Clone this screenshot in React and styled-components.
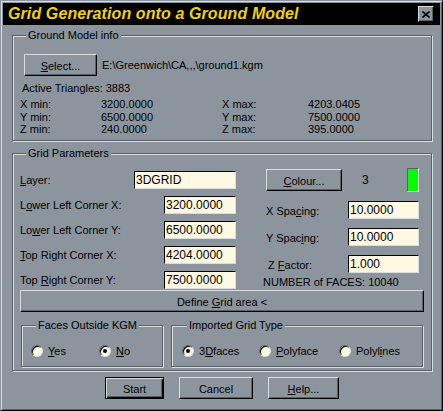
import React from "react";
import styled, { createGlobalStyle } from "styled-components";

const BG = "#8c959e";
const LIGHT = "#d9dde0";
const DARK = "#5a6168";
const FIELD = "#fff8e2";

const Global = createGlobalStyle`
  body {
    margin: 0;
    background: ${BG};
    font-family: "Liberation Sans", Arial, sans-serif;
    font-size: 11px;
    color: #000;
  }
  u { text-underline-offset: 1px; }
`;

const Window = styled.div`
  width: 443px;
  height: 411px;
  box-sizing: border-box;
  background: ${BG};
  border: 1px solid;
  border-color: ${BG} #000 #000 ${BG};
  box-shadow: inset 1px 1px 0 ${LIGHT}, inset -1px -1px 0 ${DARK};
  padding: 2px;
  display: flex;
  flex-direction: column;
`;

const TitleBar = styled.div`
  height: 22px;
  background: #000;
  display: flex;
  align-items: center;
  justify-content: space-between;
  padding: 0 6px 0 5px;
`;

const Title = styled.div`
  color: #f0d010;
  font: italic bold 16px "Liberation Sans", Arial, sans-serif;
  letter-spacing: 0.1px;
`;

const CloseButton = styled.div`
  width: 16px;
  height: 16px;
  box-sizing: border-box;
  background: ${BG};
  border: 1px solid;
  border-color: ${LIGHT} #000 #000 ${LIGHT};
  box-shadow: inset -1px -1px 0 ${DARK};
  display: flex;
  align-items: center;
  justify-content: center;
`;

const Body = styled.div`
  padding: 4px 8px 0 9px;
  display: flex;
  flex-direction: column;
`;

const Group = styled.fieldset`
  margin: ${(p) => p.$mt || 0}px 0 0 0;
  padding: ${(p) => p.$pad};
  border: 1px solid ${DARK};
  box-shadow: inset 1px 1px 0 ${LIGHT}, 1px 1px 0 ${LIGHT};
  min-inline-size: 0;
  box-sizing: border-box;
  width: ${(p) => (p.$w ? p.$w + "px" : "auto")};
  flex: ${(p) => (p.$w ? "none" : 1)};
`;

const Legend = styled.legend`
  padding: 0 2px;
  margin-left: ${(p) => p.$ml || 6}px;
  background: ${BG};
  line-height: 13px;
`;

const Button = styled.div`
  box-sizing: border-box;
  height: 22px;
  width: ${(p) => (p.$w ? p.$w + "px" : "auto")};
  display: flex;
  align-items: center;
  justify-content: center;
  border: 1px solid;
  border-color: ${(p) => (p.$default ? "#000" : `${LIGHT} #000 #000 ${LIGHT}`)};
  box-shadow: ${(p) =>
    p.$default
      ? `inset 1px 1px 0 ${LIGHT}, inset -1px -1px 0 #000, inset -2px -2px 0 ${DARK}`
      : `inset -1px -1px 0 ${DARK}`};
  background: ${BG};
  padding-top: 1px;
  flex: none;
`;

const SelectRow = styled.div`
  display: flex;
  align-items: center;
  gap: 5px;
  padding-left: 4px;
`;

const Line = styled.div`
  line-height: 13px;
  margin: ${(p) => p.$m || 0};
`;

const Stats = styled.div`
  display: grid;
  grid-template-columns: 81px 121px 86px auto;
  line-height: 12.7px;
  margin-top: 3px;
`;

const Columns = styled.div`
  display: flex;
  gap: 30px;
  align-items: flex-start;
`;

const LeftCol = styled.div`
  width: 216px;
  display: flex;
  flex-direction: column;
  gap: 7px;
  padding-top: 1px;
`;

const FieldRow = styled.div`
  display: flex;
  align-items: center;
  justify-content: space-between;
  height: 18px;
`;

const Field = styled.div`
  box-sizing: border-box;
  width: ${(p) => p.$w}px;
  height: 18px;
  background: ${FIELD};
  border: 1px solid;
  border-color: #000 ${LIGHT} ${LIGHT} #000;
  font-size: 12px;
  line-height: 16px;
  padding-left: 1px;
`;

const RightCol = styled.div`
  width: 153px;
  display: flex;
  flex-direction: column;
`;

const ColourRow = styled.div`
  display: flex;
  align-items: center;
  height: 24px;
  margin-top: -2px;
`;

const ColourNum = styled.span`
  margin-left: 20px;
  font-size: 12px;
`;

const Swatch = styled.div`
  margin-left: auto;
  width: 12px;
  height: 24px;
  box-sizing: border-box;
  background: #00ff00;
  border: 1px solid;
  border-color: ${DARK} #fff #fff ${DARK};
`;

const RightFields = styled.div`
  display: flex;
  flex-direction: column;
  gap: 9px;
  margin-top: 9px;
`;

const RightLabel = styled.span`
  padding-left: ${(p) => p.$indent || 0}px;
  padding-top: ${(p) => p.$drop || 0}px;
`;

const FacesCount = styled.div`
  line-height: 13px;
  margin-top: 3px;
  margin-left: -3px;
`;

const WideButton = styled(Button)`
  margin-top: 1px;
`;

const SubGroups = styled.div`
  display: flex;
  gap: 8px;
  margin: 7px 1px 0 1px;
`;

const Radios = styled.div`
  display: grid;
  grid-template-columns: ${(p) => p.$cols};
  align-items: center;
  height: 13px;
`;

const RadioItem = styled.div`
  display: flex;
  align-items: center;
  gap: 5px;
`;

const RadioDot = styled.span`
  width: 12px;
  height: 12px;
  box-sizing: border-box;
  border-radius: 50%;
  background: ${FIELD};
  border: 1px solid;
  border-color: ${DARK} ${LIGHT} ${LIGHT} ${DARK};
  box-shadow: inset 1px 1px 0 #000;
  position: relative;
  &::after {
    content: "";
    display: ${(p) => (p.$on ? "block" : "none")};
    position: absolute;
    width: 4px;
    height: 4px;
    border-radius: 50%;
    background: #000;
    left: 3px;
    top: 3px;
  }
`;

const Footer = styled.div`
  display: flex;
  justify-content: center;
  gap: 15px;
  margin-top: 6px;
`;

function Radio({ on, children }) {
  return (
    <RadioItem>
      <RadioDot $on={on} />
      <span>{children}</span>
    </RadioItem>
  );
}

const leftFields = [
  { label: <><u>L</u>ayer:</>, value: "3DGRID", w: 102 },
  { label: <>L<u>o</u>wer Left Corner X:</>, value: "3200.0000", w: 72 },
  { label: <>Lo<u>w</u>er Left Corner Y:</>, value: "6500.0000", w: 72 },
  { label: <><u>T</u>op Right Corner X:</>, value: "4204.0000", w: 72 },
  { label: <>Top <u>R</u>ight Corner Y:</>, value: "7500.0000", w: 72 },
];

const rightFields = [
  { label: <>X Spa<u>c</u>ing:</>, value: "10.0000" },
  { label: <>Y Spac<u>i</u>ng:</>, value: "10.0000" },
  { label: <>Z <u>F</u>actor:</>, value: "1.000", indent: 2 },
];

export default function App() {
  return (
    <>
      <Global />
      <Window>
        <TitleBar>
          <Title>Grid Generation onto a Ground Model</Title>
          <CloseButton>
            <svg width="8" height="7" viewBox="0 0 8 7">
              <path d="M0.5 0.5 L7.5 6.5 M7.5 0.5 L0.5 6.5" stroke="#000" strokeWidth="1.6" />
            </svg>
          </CloseButton>
        </TitleBar>
        <Body>
          <Group $pad="12px 8px 4px 7px">
            <Legend>Ground Model info</Legend>
            <SelectRow>
              <Button $w={73}>
                <span>
                  <u>S</u>elect...
                </span>
              </Button>
              <span>E:\Greenwich\CA,,,\ground1.kgm</span>
            </SelectRow>
            <Line $m="6px 0 0 2px">Active Triangles: 3883</Line>
            <Stats>
              <span>X min:</span>
              <span>3200.0000</span>
              <span>X max:</span>
              <span>4203.0405</span>
              <span>Y min:</span>
              <span>6500.0000</span>
              <span>Y max:</span>
              <span>7500.0000</span>
              <span>Z min:</span>
              <span>240.0000</span>
              <span>Z max:</span>
              <span>395.0000</span>
            </Stats>
          </Group>

          <Group $mt={6} $pad="10px 7px 3px 7px">
            <Legend>Grid Parameters</Legend>
            <Columns>
              <LeftCol>
                {leftFields.map((f, i) => (
                  <FieldRow key={i}>
                    <span>{f.label}</span>
                    <Field $w={f.w}>{f.value}</Field>
                  </FieldRow>
                ))}
              </LeftCol>
              <RightCol>
                <ColourRow>
                  <Button $w={76}>
                    <span>
                      <u>C</u>olour...
                    </span>
                  </Button>
                  <ColourNum>3</ColourNum>
                  <Swatch />
                </ColourRow>
                <RightFields>
                  {rightFields.map((f, i) => (
                    <FieldRow key={i}>
                      <RightLabel $indent={f.indent} $drop={2}>
                        {f.label}
                      </RightLabel>
                      <Field $w={71}>{f.value}</Field>
                    </FieldRow>
                  ))}
                </RightFields>
                <FacesCount>NUMBER of FACES: 10040</FacesCount>
              </RightCol>
            </Columns>
            <WideButton>
              <span>
                Define <u>G</u>rid area &lt;
              </span>
            </WideButton>
            <SubGroups>
              <Group $w={142} $pad="12px 0 9px 9px">
                <Legend $ml={5}>Faces Outside KGM</Legend>
                <Radios $cols="68px auto">
                  <Radio>
                    <u>Y</u>es
                  </Radio>
                  <Radio on>
                    <u>N</u>o
                  </Radio>
                </Radios>
              </Group>
              <Group $pad="12px 0 9px 10px">
                <Legend $ml={5}>Imported Grid Type</Legend>
                <Radios $cols="77px 80px auto">
                  <Radio on>
                    3<u>D</u>faces
                  </Radio>
                  <Radio>
                    <u>P</u>olyface
                  </Radio>
                  <Radio>
                    Polyl<u>i</u>nes
                  </Radio>
                </Radios>
              </Group>
            </SubGroups>
          </Group>

          <Footer>
            <Button $w={59} $default>
              Start
            </Button>
            <Button $w={74}>Cancel</Button>
            <Button $w={71}>
              <span>
                <u>H</u>elp...
              </span>
            </Button>
          </Footer>
        </Body>
      </Window>
    </>
  );
}
